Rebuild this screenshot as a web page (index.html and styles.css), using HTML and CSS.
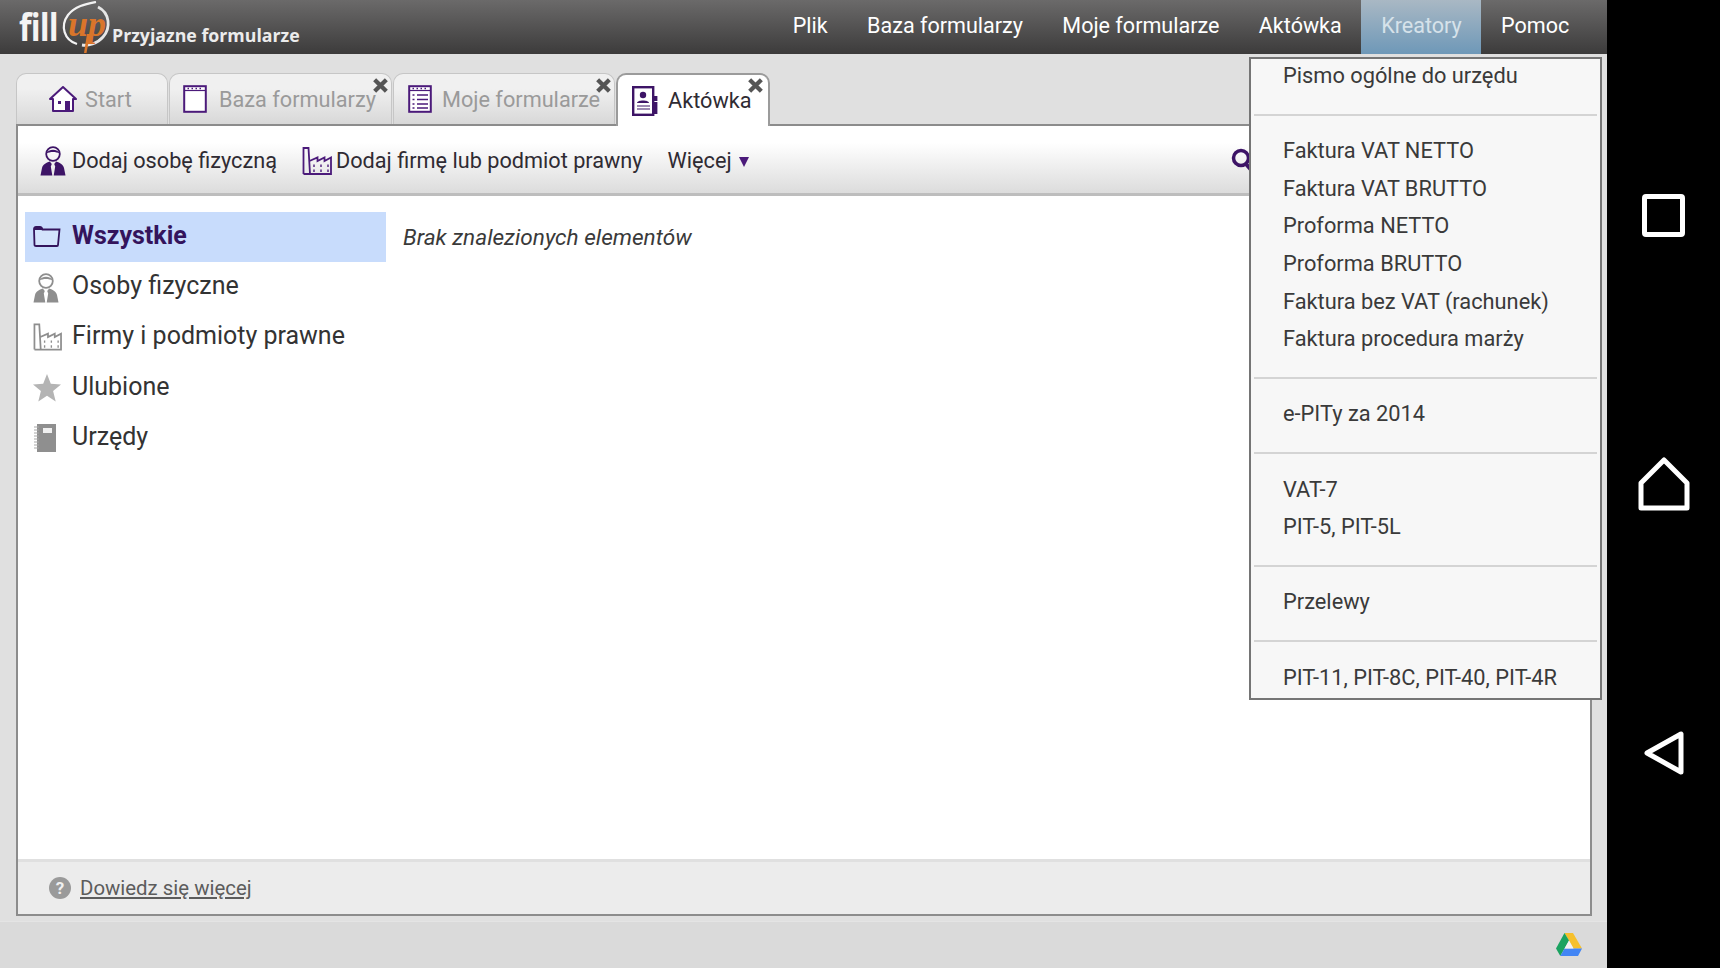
FILE: index.html
```html
<!DOCTYPE html>
<html lang="pl">
<head>
<meta charset="utf-8">
<title>FillUp - Aktówka</title>
<link rel="stylesheet" href="styles.css">
</head>
<body>
<svg class="defs" width="0" height="0" aria-hidden="true">
  <symbol id="i-person" viewBox="0 0 26 30">
    <circle cx="13" cy="8" r="6.800" fill="none" stroke="currentColor" stroke-width="1.800"/>
    <path d="M6.400 7.500C8 2.500 18 2.500 19.600 7.500 16 5.500 10 5.500 6.400 7.500Z" fill="currentColor"/>
    <path d="M0.500 29.500 2 22C2.800 18.500 6 16.800 9.800 15.500L11.800 18 10.800 20.500 12.300 29.500ZM25.500 29.500 24 22C23.200 18.500 20 16.800 16.200 15.500L14.200 18 15.200 20.500 13.700 29.500Z" fill="currentColor"/>
  </symbol>
  <symbol id="i-factory" viewBox="0 0 30 28">
    <path d="M1.500 27V1H6.500L8 27M1.500 27H29V10.500L22.500 14V10.500L15.500 14V10.500L7.500 14" fill="none" stroke="currentColor" stroke-width="1.800"/>
    <path d="M12 17.500v2.500M19 17.500v2.500M26 17.500v2.500M12 22.500v2.500M19 22.500v2.500M26 22.500v2.500" stroke="currentColor" stroke-width="1.400"/>
  </symbol>
  <symbol id="i-close" viewBox="0 0 16 16">
    <path d="M2.500 2.500 13.500 13.500M13.500 2.500 2.500 13.500" stroke="currentColor" stroke-width="4" fill="none"/>
  </symbol>
  <symbol id="i-pad" viewBox="0 0 24 28">
    <rect x="1.200" y="1.200" width="21.600" height="25.600" fill="#fff" stroke="currentColor" stroke-width="2"/>
    <path d="M1.500 5.500H22.500" stroke="currentColor" stroke-width="1.200"/>
    <path d="M4.500 3.500h1.500M8.500 3.500h1.500M12.500 3.500h1.500M16.500 3.500h1.500" stroke="currentColor" stroke-width="1.500"/>
  </symbol>
</svg>

<div class="app">
  <header class="topbar">
    <div class="logo">
      <span class="logo-fill">fill</span>
      <svg class="logo-ring" width="52" height="54" viewBox="0 0 52 54">
        <path d="M17 44C4 40 0 26 8 15 15 6 26 4 36 2" fill="none" stroke="#f2f2f2" stroke-width="2.200"/>
        <path d="M38 7C50 13 51 28 43 37 37 44 28 46 22 45" fill="none" stroke="#e6e6e6" stroke-width="2.800"/>
        <text x="27" y="36" text-anchor="middle" class="logo-up">up</text>
        <path d="M27 34 24 53 26.500 53 30 34Z" fill="#d9752a"/>
      </svg>
      <span class="logo-tag">Przyjazne formularze</span>
    </div>
    <nav class="mainnav">
      <a class="navitem">Plik</a>
      <a class="navitem">Baza formularzy</a>
      <a class="navitem">Moje formularze</a>
      <a class="navitem">Aktówka</a>
      <a class="navitem navitem-active">Kreatory</a>
      <a class="navitem">Pomoc</a>
    </nav>
  </header>

  <main class="content">
    <div class="tabs">
      <div class="tab tab-start">
        <svg class="tab-icon" width="28" height="26" viewBox="0 0 28 26">
          <path d="M1 13 14 1 27 13H24V25H4V13Z" fill="#fff" stroke="#4b1a7a" stroke-width="2" stroke-linejoin="round"/>
          <rect x="16" y="15" width="5" height="10" fill="#4b1a7a"/>
          <rect x="9" y="15" width="3" height="3" fill="#4b1a7a"/>
        </svg>
        <span>Start</span>
      </div>
      <div class="tab tab-base">
        <svg class="tab-icon pad" width="24" height="28"><use href="#i-pad"/></svg>
        <span>Baza formularzy</span>
        <svg class="tab-close" width="17" height="17"><use href="#i-close"/></svg>
      </div>
      <div class="tab tab-mine">
        <svg class="tab-icon pad" width="24" height="28" viewBox="0 0 24 28">
          <use href="#i-pad"/>
          <path d="M4.500 10h2M9 10h11M4.500 14.500h2M9 14.500h11M4.500 19h2M9 19h11M4.500 23h2M9 23h11" stroke="#4b1a7a" stroke-width="1.500"/>
        </svg>
        <span>Moje formularze</span>
        <svg class="tab-close" width="17" height="17"><use href="#i-close"/></svg>
      </div>
      <div class="tab tab-active">
        <svg class="tab-icon" width="26" height="30" viewBox="0 0 26 30">
          <rect x="1.200" y="1.200" width="20" height="27.600" fill="#fff" stroke="#3d1466" stroke-width="2.400"/>
          <rect x="22" y="10" width="3.400" height="5" fill="#3d1466"/>
          <rect x="22" y="16" width="3.400" height="12" fill="#3d1466"/>
          <circle cx="11" cy="9" r="3.200" fill="#3d1466"/>
          <path d="M5 17C5 13.500 17 13.500 17 17Z" fill="#3d1466"/>
          <path d="M5 20H18M5 23H18" stroke="#3d1466" stroke-width="1.200"/>
        </svg>
        <span>Aktówka</span>
        <svg class="tab-close" width="17" height="17"><use href="#i-close"/></svg>
      </div>
    </div>

    <section class="panel">
      <div class="toolbar">
        <a class="tool tool-person">
          <svg class="tool-icon" width="26" height="30"><use href="#i-person"/></svg>
          <span>Dodaj osobę fizyczną</span>
        </a>
        <a class="tool tool-firm">
          <svg class="tool-icon" width="30" height="28"><use href="#i-factory"/></svg>
          <span>Dodaj firmę lub podmiot prawny</span>
        </a>
        <a class="tool tool-more">Więcej<span class="caret"></span></a>
        <svg class="search" width="24" height="26" viewBox="0 0 24 26">
          <circle cx="10" cy="10" r="7.500" fill="none" stroke="#3d1466" stroke-width="3.500"/>
          <path d="M15 16 22 24" stroke="#3d1466" stroke-width="4"/>
        </svg>
      </div>

      <div class="body">
        <ul class="side">
          <li class="side-item side-item-active">
            <svg class="side-icon icon-dark" width="28" height="22" viewBox="0 0 28 22">
              <path d="M1.500 20 1 4C1 2.500 2 2 3 2H7C8 2 9 3 9.500 4.500H26.500L25 20C25 20.500 24.500 21 24 21H3C2 21 1.500 20.500 1.500 20Z" fill="#fff" fill-opacity=".2" stroke="currentColor" stroke-width="1.800"/>
              <path d="M1 2.500H8L9.500 5H1Z" fill="currentColor"/>
            </svg>
            <span>Wszystkie</span>
          </li>
          <li class="side-item">
            <svg class="side-icon icon-grey" width="26" height="30"><use href="#i-person"/></svg>
            <span>Osoby fizyczne</span>
          </li>
          <li class="side-item">
            <svg class="side-icon icon-grey" width="29" height="28"><use href="#i-factory"/></svg>
            <span>Firmy i podmioty prawne</span>
          </li>
          <li class="side-item">
            <svg class="side-icon icon-star" width="28" height="28" viewBox="0 0 28 28">
              <path d="M14 0 17.800 9.800 28 10.400 20.100 17 22.700 27.500 14 21.800 5.300 27.500 7.900 17 0 10.400 10.200 9.800Z" fill="currentColor"/>
            </svg>
            <span>Ulubione</span>
          </li>
          <li class="side-item">
            <svg class="side-icon icon-grey" width="24" height="28" viewBox="0 0 24 28">
              <rect x="4" y="0" width="19" height="28" fill="#8f8f8f"/>
              <rect x="10" y="4" width="9" height="5" fill="#f0f0f0"/>
              <path d="M1 3H6M1 6H6M1 9H6M1 12H6M1 15H6M1 18H6M1 21H6M1 24H6" stroke="#a8a8a8" stroke-width="1.200"/>
            </svg>
            <span>Urzędy</span>
          </li>
        </ul>
        <p class="empty">Brak znalezionych elementów</p>
      </div>

      <div class="panel-foot">
        <span class="help">?</span>
        <a class="more-link">Dowiedz się więcej</a>
      </div>
    </section>
  </main>

  <footer class="statusbar">
    <svg class="drive" width="26" height="24" viewBox="0 0 26 24">
      <path d="M8.500 0H17L26 15.500H17.500Z" fill="#f6c02c"/>
      <path d="M8.500 0 0 15.500 4.300 23 13 7.500Z" fill="#1aa260"/>
      <path d="M4.300 23H22L26 15.500H8.500Z" fill="#4285f4"/>
      <path d="M13 7.500 8.500 15.500H17.500Z" fill="#f2f2f2"/>
    </svg>
  </footer>

  <div class="menu">
    <a class="menu-item">Pismo ogólne do urzędu</a>
    <hr class="menu-sep">
    <a class="menu-item">Faktura VAT NETTO</a>
    <a class="menu-item">Faktura VAT BRUTTO</a>
    <a class="menu-item">Proforma NETTO</a>
    <a class="menu-item">Proforma BRUTTO</a>
    <a class="menu-item">Faktura bez VAT (rachunek)</a>
    <a class="menu-item">Faktura procedura marży</a>
    <hr class="menu-sep">
    <a class="menu-item">e-PITy za 2014</a>
    <hr class="menu-sep">
    <a class="menu-item">VAT-7</a>
    <a class="menu-item">PIT-5, PIT-5L</a>
    <hr class="menu-sep">
    <a class="menu-item">Przelewy</a>
    <hr class="menu-sep">
    <a class="menu-item">PIT-11, PIT-8C, PIT-40, PIT-4R</a>
  </div>
</div>

<aside class="sysnav">
  <svg width="43" height="43" viewBox="0 0 43 43"><rect x="2.500" y="2.500" width="38" height="38" rx="1.500" fill="none" stroke="#fff" stroke-width="5"/></svg>
  <svg width="52" height="54" viewBox="0 0 52 54"><path d="M3 26 26 3 49 26V51H3Z" fill="none" stroke="#fff" stroke-width="5" stroke-linejoin="round"/></svg>
  <svg width="40" height="44" viewBox="0 0 40 44"><path d="M37 3V41L3 22Z" fill="none" stroke="#fff" stroke-width="5" stroke-linejoin="round"/></svg>
</aside>
</body>
</html>
```

FILE: styles.css
```css
* { box-sizing: border-box; }
html, body { margin: 0; height: 100%; }
body {
  display: flex;
  width: 1720px;
  height: 968px;
  overflow: hidden;
  font-family: Roboto, "Liberation Sans", sans-serif;
  font-size: 21.700px;
  color: #2f2b33;
  background: #000;
}
.defs { position: absolute; }

.app {
  position: relative;
  width: 1607px;
  height: 968px;
  display: flex;
  flex-direction: column;
  background: #e0e0e0;
}

/* top bar */
.topbar {
  height: 54px;
  flex: none;
  display: flex;
  justify-content: space-between;
  background: linear-gradient(#6b6a6a, #3c3b3b);
  padding-right: 18px;
}
.logo { display: flex; align-items: flex-start; padding-left: 19px; color: #f4f4f4; }
.logo-fill {
  font-family: "Open Sans", Roboto, sans-serif;
  font-weight: 700;
  font-size: 38px;
  line-height: 52px;
  letter-spacing: -1px;
  width: 41px;
  transform: scaleX(.85);
  transform-origin: left;
}
.logo-ring { overflow: visible; flex: none; }
.logo-up {
  font-family: "Liberation Serif", serif;
  font-style: italic;
  font-weight: 700;
  font-size: 36px;
  fill: #d9752a;
}
.logo-tag {
  font-family: "Open Sans", Roboto, sans-serif;
  font-weight: 700;
  font-size: 18px;
  line-height: 22px;
  margin-top: 24px;
  margin-left: 0;
  color: #ececec;
  white-space: nowrap;
  transform: scaleX(.985);
  transform-origin: left;
}
.mainnav { display: flex; font-size: 21.550px; }
.navitem {
  padding: 0 19.700px;
  line-height: 52px;
  color: #fff;
  white-space: nowrap;
}
.navitem-active {
  color: #d6e2ea;
  background: linear-gradient(#a9b8c4, #6e98b8);
}

/* content */
.content {
  flex: 1;
  display: flex;
  flex-direction: column;
  padding: 19px 15px 5px 16px;
  min-height: 0;
}
.tabs { display: flex; height: 51px; flex: none; gap: 1px; position: relative; z-index: 1; }
.tab {
  position: relative;
  height: 51px;
  display: flex;
  align-items: center;
  border: 1px solid #c6c6c6;
  border-bottom: 0;
  border-radius: 10px 10px 0 0;
  background: linear-gradient(#f0f0f0 30%, #d8d8d8);
  color: #9a9a9a;
  white-space: nowrap;
}
.tab-start { width: 152px; padding-left: 32px; }
.tab-base { width: 223px; padding-left: 13px; }
.tab-mine { width: 222px; padding-left: 14px; }
.tab-active {
  width: 154px;
  height: 53px;
  padding-left: 14px;
  color: #2f2b33;
  border: 2px solid #9b9b9b;
  border-bottom: 0;
  background: #fff;
  margin-bottom: -2px;
}
.tab-icon { margin-right: 8px; flex: none; }
.tab-base .tab-icon { margin-right: 12px; }
.tab-mine .tab-icon { margin-right: 10px; }
.tab-active .tab-icon { margin-right: 10px; }
.pad { color: #4b1a7a; }
.tab-close { position: absolute; right: 2px; top: 3px; color: #555; }
.tab-active .tab-close { right: 4px; top: 2px; }

.panel {
  flex: 1;
  min-height: 0;
  display: flex;
  flex-direction: column;
  border: 2px solid #8c8c8c;
  background: #fff;
}
.toolbar {
  height: 70px;
  flex: none;
  display: flex;
  align-items: center;
  padding: 2px 335px 0 22px;
  background: linear-gradient(#fff 25%, #dcdcdc);
  border-bottom: 3px solid #bdbdbd;
}
.tool { display: flex; align-items: center; white-space: nowrap; }
.tool-icon { color: #3d1466; flex: none; }
.tool-person .tool-icon { margin-right: 6px; }
.tool-firm { margin-left: 25px; }
.tool-firm .tool-icon { margin-right: 4px; color: #4b1a7a; }
.tool-more { margin-left: 25px; }
.caret {
  width: 0;
  height: 0;
  margin-left: 7px;
  margin-top: 2px;
  border-left: 5.500px solid transparent;
  border-right: 5.500px solid transparent;
  border-top: 10px solid #4b1a7a;
}
.search { margin-left: auto; flex: none; }

.body { flex: 1; display: flex; min-height: 0; padding: 16px 0 0 7px; }
.side { list-style: none; margin: 0; padding: 0; width: 361px; flex: none; }
.side-item {
  height: 50.200px;
  display: flex;
  align-items: center;
  font-size: 25px;
  color: #333;
  position: relative;
  padding: 0 0 3px 47px;
}
.side-icon { position: absolute; left: 8px; top: 11px; }
.side-item-active {
  background: #c8dcfc;
  font-weight: 700;
  color: #34145c;
}
.icon-dark { color: #34145c; top: 13px; }
.icon-grey { color: #8e8e8e; }
.icon-star { color: #b4b4b4; }
.empty {
  margin: 1px 0 0 17px;
  line-height: 50px;
  font-size: 22.600px;
  font-style: italic;
  color: #3a3a3a;
}

.panel-foot {
  height: 55px;
  flex: none;
  display: flex;
  align-items: center;
  padding-left: 31px;
  background: #ececec;
  border-top: 3px solid #e0e0e0;
  font-size: 20.400px;
  color: #5c5c5c;
}
.help {
  width: 22px;
  height: 22px;
  border-radius: 50%;
  background: #9a9a9a;
  color: #f0f0f0;
  font-weight: 700;
  font-size: 17px;
  text-align: center;
  line-height: 22px;
  margin-right: 9px;
}
.more-link { text-decoration: underline; }

.statusbar {
  height: 47px;
  flex: none;
  display: flex;
  align-items: center;
  justify-content: flex-end;
  padding-right: 25px;
  background: #dadada;
  border-top: 1px solid #e4e4e4;
}

/* dropdown */
.menu {
  position: absolute;
  z-index: 5;
  left: 1249px;
  top: 57px;
  width: 353px;
  height: 643px;
  overflow: hidden;
  padding: 0 3px;
  background: #f7f7f7;
  border: 2px solid #757575;
  font-size: 21.800px;
  color: #3a3a3a;
}
.menu-item {
  display: block;
  height: 37.600px;
  line-height: 34px;
  padding-left: 29px;
  white-space: nowrap;
}
.menu-sep {
  height: 37.600px;
  margin: 0;
  border: 0;
  background: linear-gradient(#d4d4d4, #d4d4d4) center 17px / 100% 2px no-repeat;
}

/* system navigation */
.sysnav {
  flex: 1;
  display: grid;
  grid-template-rows: repeat(3, 269px);
  align-content: center;
  justify-items: center;
  align-items: center;
}
```
